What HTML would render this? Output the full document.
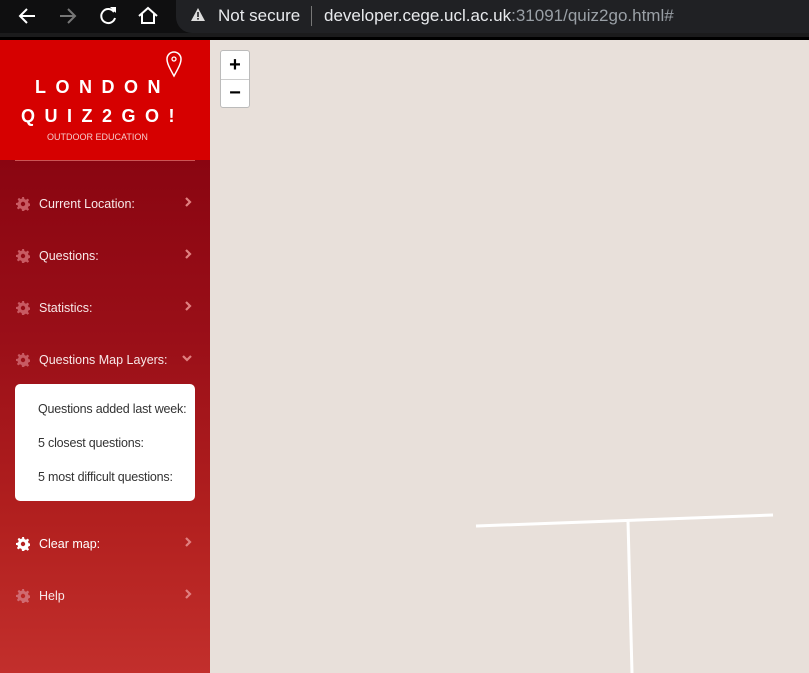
<!DOCTYPE html>
<html><head><meta charset="utf-8"><style>
body{margin:0;width:809px;height:673px;overflow:hidden;font-family:"Liberation Sans",sans-serif;background:#e8e0da;position:relative}
.top{position:absolute;left:0;top:0;width:809px;height:33px;background:#0f0f10}
.omni{position:absolute;left:176px;top:0;width:640px;height:33px;background:#202124;border-radius:0 0 0 16px}
.strip{position:absolute;left:0;top:33px;width:809px;height:4px;background:#1b1b1c}
.strip2{position:absolute;left:0;top:37px;width:809px;height:3px;background:#000}
.side{position:absolute;left:0;top:40px;width:210px;height:633px;background:linear-gradient(#8a0511 120px,#9a0f18 300px,#b2201f 480px,#c22f2c 633px)}
.logo{position:absolute;left:0;top:40px;width:210px;height:120px;background:#d60000}
.sep{position:absolute;left:15px;top:160px;width:180px;height:1px;background:#c55}
.t{position:absolute;color:#fff;white-space:nowrap}
.item{position:absolute;left:0;width:210px;height:20px;color:#f8e8e8;font-size:12.5px}
.item span{position:absolute;left:39px;top:1px}
.item .g{position:absolute;left:16px;top:1px;width:14px;height:14px}
.item .c{position:absolute;left:184px;top:1px}
.box{position:absolute;left:15px;top:384px;width:180px;height:117px;background:#fff;border-radius:5px;font-size:12.5px;color:#333;letter-spacing:-0.2px}
.box div{position:absolute;left:23px;white-space:nowrap}
.zoom{position:absolute;left:220px;top:50px;width:28px;height:56px;background:#fff;border:1px solid #bbb;border-radius:3px}
</style></head><body>
<div class="top"></div>
<svg style="position:absolute;left:0;top:0" width="180" height="33">
<g stroke="#fff" stroke-width="2" fill="none"><path d="M35 16H20M27 9l-7 7 7 7"/><path d="M60 16H75M68 9l7 7-7 7" stroke="#777"/>
<path d="M114 12 a7 7 0 1 0 1 6"/><path d="M139 16l9-8 9 8M142 14v9h12v-9"/></g>
<path d="M110 7h6v6z" fill="#fff"/></svg>
<div class="omni"></div>
<svg style="position:absolute;left:190px;top:7px" width="16" height="16"><path d="M8 1L15 14H1z" fill="#ddd"/><rect x="7.2" y="5" width="1.6" height="5" fill="#202124"/><rect x="7.2" y="11" width="1.6" height="1.6" fill="#202124"/></svg>
<div class="t" style="left:218px;top:6px;font-size:17px;color:#e8eaed">Not secure</div>
<div style="position:absolute;left:311px;top:6px;width:1px;height:20px;background:#777"></div>
<div class="t" style="left:324px;top:6px;font-size:17px;color:#e8eaed">developer.cege.ucl.ac.uk<span style="color:#9aa0a6">:31091/quiz2go.html#</span></div>
<div class="strip"></div><div class="strip2"></div>
<div class="side"></div>
<div class="logo"></div>
<svg style="position:absolute;left:165px;top:50px" width="20" height="28"><path d="M9 26 C4 17 2 13 2 9 a7 7 0 0 1 14 0 c0 4 -2 8 -7 17z" fill="none" stroke="#fff" stroke-width="1.5"/><circle cx="9" cy="9" r="2" fill="none" stroke="#fff" stroke-width="1.3"/></svg>
<div class="t" style="left:35px;top:77px;font-size:18px;font-weight:bold;letter-spacing:9.5px">LONDON</div>
<div class="t" style="left:21px;top:106px;font-size:18px;font-weight:bold;letter-spacing:9.5px">QUIZ2GO!</div>
<div class="t" style="left:47px;top:132px;font-size:9px;color:#f4caca">OUTDOOR EDUCATION</div>
<div class="sep"></div>
<svg width="0" height="0" style="position:absolute"><defs><symbol id="gear" viewBox="0 0 14 14"><path d="M6 0h2l.4 2 1.6.8 1.7-1.2 1.4 1.4-1.2 1.7.8 1.6 2 .4v2l-2 .4-.8 1.6 1.2 1.7-1.4 1.4-1.7-1.2-1.6.8L8 14H6l-.4-2-1.6-.8-1.7 1.2-1.4-1.4 1.2-1.7L1.3 8 0 8V6l2-.4.8-1.6-1.2-1.7L3 .9l1.7 1.2L6.3 1.3z M7 4.8a2.2 2.2 0 1 0 0 4.4a2.2 2.2 0 1 0 0-4.4z" fill-rule="evenodd"/></symbol>
<symbol id="chev" viewBox="0 0 8 10"><path d="M2 1l4 4-4 4" stroke="#e08080" stroke-width="2.2" fill="none"/></symbol></defs></svg>
<div class="item" style="top:196px"><svg class="g" fill="#c85a62"><use href="#gear"/></svg><span>Current Location:</span><svg class="c" width="8" height="10"><use href="#chev"/></svg></div>
<div class="item" style="top:248px"><svg class="g" fill="#c85a62"><use href="#gear"/></svg><span>Questions:</span><svg class="c" width="8" height="10"><use href="#chev"/></svg></div>
<div class="item" style="top:300px"><svg class="g" fill="#c85a62"><use href="#gear"/></svg><span>Statistics:</span><svg class="c" width="8" height="10"><use href="#chev"/></svg></div>
<div class="item" style="top:352px"><svg class="g" fill="#c85a62"><use href="#gear"/></svg><span>Questions Map Layers:</span><svg style="position:absolute;left:182px;top:3px" width="10" height="8"><path d="M1 1l4 4 4-4" stroke="#e08080" stroke-width="2.2" fill="none"/></svg></div>
<div class="box"><div style="top:18px">Questions added last week:</div><div style="top:52px">5 closest questions:</div><div style="top:86px">5 most difficult questions:</div></div>
<div class="item" style="top:536px;color:#fff"><svg class="g" fill="#fff"><use href="#gear"/></svg><span>Clear map:</span><svg class="c" width="8" height="10"><use href="#chev"/></svg></div>
<div class="item" style="top:588px"><svg class="g" fill="#d06a70"><use href="#gear"/></svg><span>Help</span><svg class="c" width="8" height="10"><use href="#chev"/></svg></div>
<div class="zoom"><div style="position:absolute;top:0;left:0;width:28px;height:28px;border-bottom:1px solid #ccc;text-align:center;font-size:20px;line-height:28px;font-weight:bold">+</div><div style="position:absolute;top:29px;left:0;width:28px;height:27px;text-align:center;font-size:20px;line-height:26px;font-weight:bold">&#8722;</div></div>
<svg style="position:absolute;left:0;top:0" width="809" height="673"><g stroke="#fff" stroke-width="3" fill="none"><path d="M476 526L773 515"/><path d="M628 521L632 673"/></g></svg>
</body></html>
